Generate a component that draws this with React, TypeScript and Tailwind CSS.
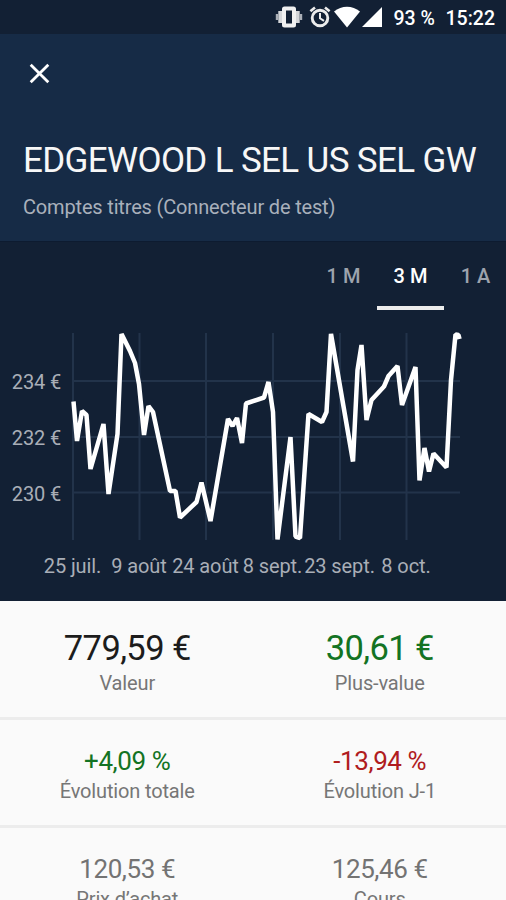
import React from 'react';
import { clsx } from 'clsx';

const ranges = ['1 M', '3 M', '1 A'];

const yTicks = [
  { y: 381, label: '234 €' },
  { y: 437, label: '232 €' },
  { y: 492.5, label: '230 €' },
];

const xTicks = [
  { x: 73, label: '25 juil.' },
  { x: 139.5, label: '9 août' },
  { x: 206, label: '24 août' },
  { x: 273, label: '8 sept.' },
  { x: 340, label: '23 sept.' },
  { x: 406.5, label: '8 oct.' },
];

const points =
  '73.5,401.5 77,441 82,411 86.5,415 90.5,469 103.5,424 108.5,494 117.5,434 121.5,334 130,351 135,363 139,384 144,435 148.5,406 153,412 170,491 175.5,491 180,517.5 196.5,502 201.5,482.5 210.5,521 228,419 232.5,426 237,418 242,443 246,403.5 264,397.5 268.5,382 273,412 277.5,539.5 290.5,437 295.5,536.5 300,538 308.5,414 322,422 326.5,412 331,334 353,461.5 357.5,370 361.5,345 366.5,420 371.5,400 384,386.5 388.5,376 397.5,366 402,405 415.5,367 419.5,480.5 424.5,448 429,471.5 433.5,453.5 446.5,467.5 451,380 455.5,334.5 458.5,335 459.5,339';

const rows = [
  [
    { value: '779,59 €', label: 'Valeur', color: 'text-[#1c1c1c]' },
    { value: '30,61 €', label: 'Plus-value', color: 'text-[#137323]' },
  ],
  [
    { value: '+4,09 %', label: 'Évolution totale', color: 'text-[#137323]' },
    { value: '-13,94 %', label: 'Évolution J-1', color: 'text-[#b01c20]' },
  ],
  [
    { value: '120,53 €', label: 'Prix d’achat', color: 'text-[#737373]' },
    { value: '125,46 €', label: 'Cours', color: 'text-[#737373]' },
  ],
];

const StatusBar: React.FC = () => (
  <div className="h-[34px] shrink-0 bg-[#122034] flex items-center justify-end pr-[11px] text-white">
    <svg width="28" height="22" viewBox="0 0 28 22" className="mr-[6px]">
      <path d="M5.300 5v12M22.700 5v12" stroke="#d4d6d9" strokeWidth="4" />
      <path d="M2 8v6M26 8v6" stroke="#a9aeb6" strokeWidth="2.4" />
      <rect x="9" y="2.5" width="10" height="17" rx="0.5" fill="#122034" stroke="#f0f0f0" strokeWidth="4" strokeLinejoin="round" />
    </svg>
    <svg width="22" height="22" viewBox="0 0 22 22" className="mr-[3px]" fill="none" stroke="#ececec">
      <circle cx="11" cy="12" r="7.8" strokeWidth="2.9" />
      <path d="M1.400 5.200 6 1.400M20.600 5.200 16 1.400" strokeWidth="2.6" />
      <path d="M11 7v5.300l4 2.600" strokeWidth="2" />
    </svg>
    <svg width="26" height="22" viewBox="0 0 26 22" className="mr-[2px]">
      <path d="M0 5.600C7.500-.8 18.500-.8 26 5.600L13 21.500z" fill="#fff" />
    </svg>
    <svg width="20" height="22" viewBox="0 0 20 22" className="mr-[12px]">
      <path d="M20 1v20H0z" fill="#fff" />
    </svg>
    <span className="text-[19.5px] font-medium leading-none w-[52px] whitespace-nowrap mt-[3px]">93 %</span>
    <span className="text-[19.5px] font-medium leading-none mt-[3px]">15:22</span>
  </div>
);

const Header: React.FC = () => (
  <header className="h-[207px] shrink-0 bg-[#162b46] px-[23px] pt-[29px]">
    <button className="block ml-[6px] h-[21px]">
      <svg width="21" height="21" viewBox="0 0 21 21" stroke="#fff" strokeWidth="2.8">
        <path d="M1.700 1.700 19.300 19.300M19.300 1.700 1.700 19.300" />
      </svg>
    </button>
    <h1 className="mt-[57px] text-[35px] leading-[40px] tracking-[-0.64px] text-[#f7f7f7] whitespace-nowrap">EDGEWOOD L SEL US SEL GW</h1>
    <p className="mt-[14px] text-[20px] leading-[24px] tracking-[-0.17px] text-[#a9b0bb] whitespace-nowrap">Comptes titres (Connecteur de test)</p>
  </header>
);

const Chart: React.FC = () => (
  <section className="h-[360px] shrink-0 bg-[#122034] border-t border-[#0d1b30] flex flex-col">
    <div className="flex justify-end -mr-[5px] h-[68px]">
      {ranges.map((r) => (
        <button
          key={r}
          className={clsx(
            'w-[67px] h-full pt-[4px] text-[20px] leading-none font-medium border-b-4',
            r === '3 M' ? 'text-white border-[#ececec]' : 'text-[#9da3ad] border-transparent',
            r === '1 A' && 'pr-[4px]'
          )}
        >
          {r}
        </button>
      ))}
    </div>
    <svg width="506" height="290" viewBox="0 310 506 290" fontSize="20" fill="#a9aeb7">
      <g stroke="#22334a" strokeWidth="2">
        {xTicks.map((t) => (
          <path key={t.x} d={`M${t.x} 333V540`} />
        ))}
        {yTicks.map((t) => (
          <path key={t.y} d={`M73 ${t.y}H460`} />
        ))}
      </g>
      {yTicks.map((t) => (
        <text key={t.y} x="61" y={t.y + 8} textAnchor="end" letterSpacing="-0.15">{t.label}</text>
      ))}
      {xTicks.map((t) => (
        <text key={t.x} x={t.x - 0.5} y="573" textAnchor="middle" letterSpacing="-0.1">{t.label}</text>
      ))}
      <polyline points={points} fill="none" stroke="#fff" strokeWidth="4.5" strokeLinejoin="bevel" />
    </svg>
  </section>
);

const App: React.FC = () => {
  return (
    <div className="w-[506px] h-[900px] overflow-hidden flex flex-col bg-[#fafafa] font-['Roboto',sans-serif]">
      <StatusBar />
      <Header />
      <Chart />
      {rows.map((row, i) => (
        <div
          key={i}
          className={clsx(
            'grid grid-cols-2 shrink-0 text-center pl-[1px]',
            i === 0 ? 'h-[116px] pt-[27px]' : 'h-[108px] pt-[25px] border-t-3 border-[#ececec]'
          )}
        >
          {row.map((cell) => (
            <div key={cell.label}>
              <div
                className={clsx(
                  cell.color,
                  i === 0 ? 'text-[34.5px] leading-[40px] tracking-[-0.6px]' : 'text-[26px] leading-[32px] tracking-[-0.4px]'
                )}
              >
                {cell.value}
              </div>
              <div
                className={clsx(
                  'text-[20px] leading-[24px] tracking-[-0.15px] text-[#767676]',
                  i === 0 ? 'mt-[3px]' : 'mt-[2px]'
                )}
              >
                {cell.label}
              </div>
            </div>
          ))}
        </div>
      ))}
    </div>
  );
};

export default App;
